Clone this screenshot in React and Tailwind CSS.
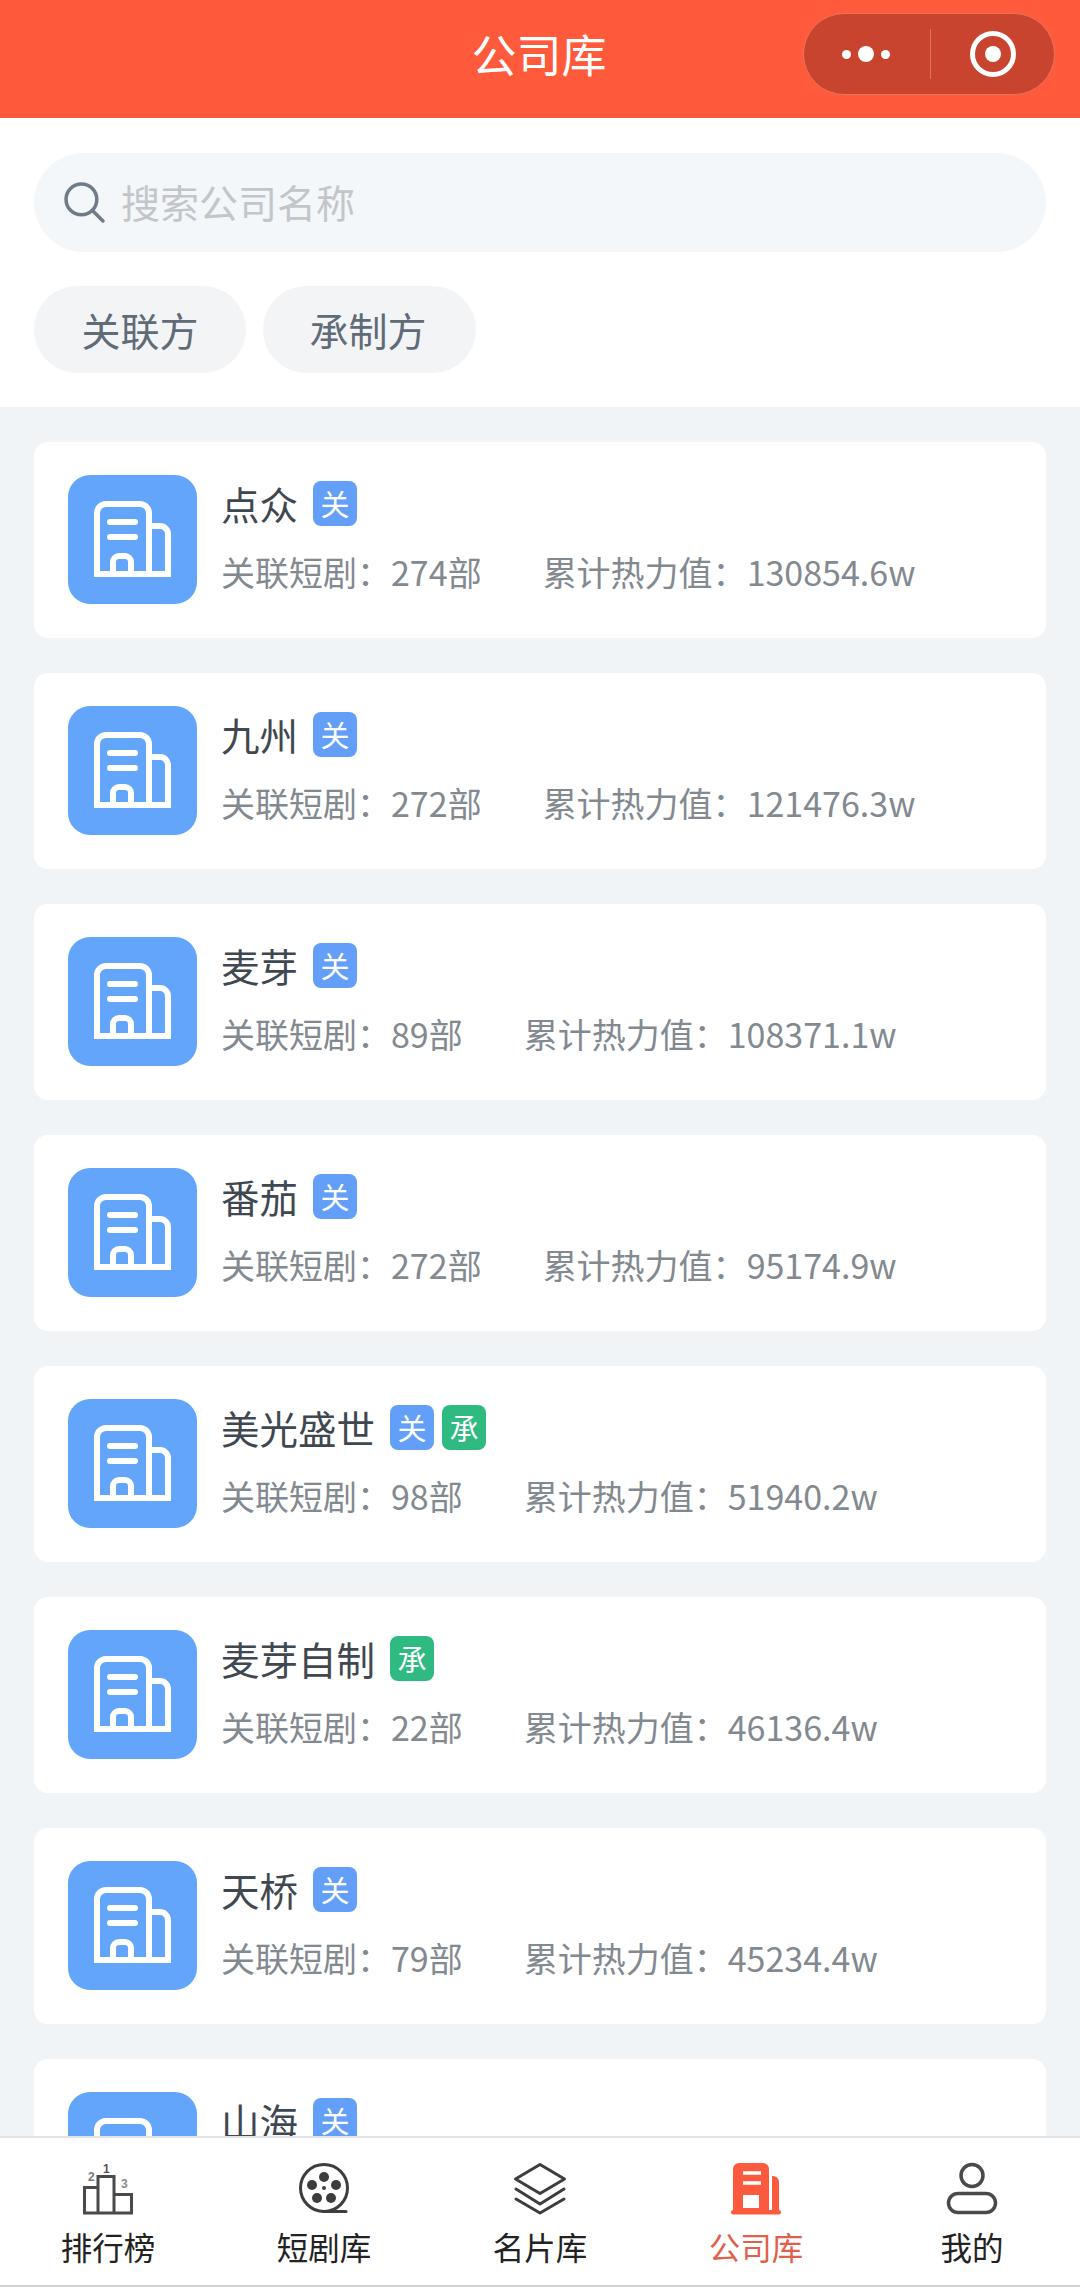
import React from "react";

const companies = [
  { name: "点众", tags: ["关"], count: "274", heat: "130854.6" },
  { name: "九州", tags: ["关"], count: "272", heat: "121476.3" },
  { name: "麦芽", tags: ["关"], count: "89", heat: "108371.1" },
  { name: "番茄", tags: ["关"], count: "272", heat: "95174.9" },
  { name: "美光盛世", tags: ["关", "承"], count: "98", heat: "51940.2" },
  { name: "麦芽自制", tags: ["承"], count: "22", heat: "46136.4" },
  { name: "天桥", tags: ["关"], count: "79", heat: "45234.4" },
  { name: "山海", tags: ["关"], count: "60", heat: "40112.5" },
];

function BuildingIcon() {
  return (
    <svg viewBox="0 0 129 129" className="w-[129px] h-[129px] block" fill="none" stroke="#fff" strokeWidth="6">
      <path d="M29 99V38a9 9 0 0 1 9-9h34a9 9 0 0 1 9 9v61" />
      <path d="M81 51h11a8 8 0 0 1 8 8v40" />
      <path d="M26 99h77" />
      <path d="M42 47h25M42 62h25" strokeLinecap="round" />
      <path d="M45 99V87a6 6 0 0 1 6-6h6a6 6 0 0 1 6 6v12" />
    </svg>
  );
}

function RankIcon() {
  return (
    <svg viewBox="0 0 54 54" className="w-[54px] h-[54px]" fill="none" stroke="#4a4a4a" strokeWidth="3">
      <path d="M3.500 51V25.500H17V51M17 51V14.500H33V51M33 32.500H50.500V51M2 51h50" />
      <text x="7" y="19" fontSize="12" fontWeight="700" fill="#777" stroke="none" fontFamily="'Liberation Sans',sans-serif">2</text>
      <text x="22" y="11" fontSize="12" fontWeight="700" fill="#555" stroke="none" fontFamily="'Liberation Sans',sans-serif">1</text>
      <text x="40" y="26" fontSize="12" fontWeight="700" fill="#888" stroke="none" fontFamily="'Liberation Sans',sans-serif">3</text>
    </svg>
  );
}

function ReelIcon() {
  return (
    <svg viewBox="0 0 54 54" className="w-[54px] h-[54px]" fill="none" stroke="#3d3d3d" strokeWidth="3">
      <circle cx="27" cy="26" r="23.500" />
      <path d="M27 49.500h22" strokeLinecap="round" />
      <g fill="#3d3d3d" stroke="none">
        <circle cx="27" cy="15" r="5" />
        <circle cx="39" cy="23" r="5" />
        <circle cx="34" cy="36" r="5" />
        <circle cx="20" cy="36" r="5" />
        <circle cx="15" cy="23" r="5" />
        <circle cx="27" cy="26" r="2" />
      </g>
    </svg>
  );
}

function LayersIcon() {
  return (
    <svg viewBox="0 0 54 54" className="w-[54px] h-[54px]" fill="none" stroke="#3d3d3d" strokeWidth="3" strokeLinejoin="round" strokeLinecap="round">
      <path d="M27 2.500 51.500 17 27 31.500 2.500 17Z" />
      <path d="M3 27 27 42 51 27" />
      <path d="M3 37 27 51 51 37" />
    </svg>
  );
}

function CompanyActiveIcon() {
  return (
    <svg viewBox="0 0 54 54" className="w-[54px] h-[54px]" fill="none">
      <path d="M4 7a6 6 0 0 1 6-6h24a6 6 0 0 1 6 6v44H4Z" fill="#fb5a3e" />
      <path d="M43 14h1a6 6 0 0 1 6 6v31h-7Z" fill="#fb5a3e" />
      <rect x="2" y="48" width="50" height="4.500" rx="2.250" fill="#fb5a3e" />
      <path d="M14 11h18M14 21h18" stroke="#fff" strokeWidth="3.500" />
      <rect x="14" y="33" width="16" height="13" fill="#fff" />
    </svg>
  );
}

function UserIcon() {
  return (
    <svg viewBox="0 0 54 54" className="w-[54px] h-[54px]" fill="none" stroke="#4a4a4a" strokeWidth="3.500">
      <circle cx="27" cy="13.500" r="11" />
      <rect x="3.500" y="31.500" width="47" height="19" rx="9.500" />
    </svg>
  );
}

function Tab({ icon, label, active }) {
  return (
    <div className="flex-1 flex flex-col items-center">
      {icon}
      <span className={`mt-[12px] text-[31.500px] leading-[36px] ${active ? "text-[#e0604c]" : "text-[#222222]"}`}>{label}</span>
    </div>
  );
}

function Card({ c }) {
  return (
    <div className="flex bg-white rounded-[14px] h-[196px] shrink-0 px-[34px] pt-[33px] gap-[25px]">
      <div className="w-[129px] h-[129px] rounded-[22px] bg-[#62a5fb] shrink-0">
        <BuildingIcon />
      </div>
      <div className="flex flex-col pt-[6px] -ml-px">
        <div className="flex items-center h-[45px] gap-[15px]">
          <span className="text-[38.500px] leading-[45px] text-[#3f4750]">{c.name}</span>
          <div className="flex gap-[8px]">
            {c.tags.map((t) => (
              <span
                key={t}
                className={`w-[44px] h-[45px] rounded-[8px] flex items-center justify-center text-white text-[29px] leading-none ${t === "关" ? "bg-[#639ff8]" : "bg-[#2fba82]"}`}
              >
                {t}
              </span>
            ))}
          </div>
        </div>
        <div className="flex mt-[23px] gap-[61px] text-[34px] leading-[46px] text-[#82898f] whitespace-nowrap">
          <span>关联短剧：{c.count}部</span>
          <span>累计热力值：{c.heat}w</span>
        </div>
      </div>
    </div>
  );
}

export default function App() {
  return (
    <div className="w-[1080px] h-[2287px] flex flex-col overflow-hidden bg-[#f0f4f7] font-['Noto_Sans_CJK_SC',sans-serif]">
      <header className="relative h-[118px] shrink-0 bg-[#ff5a3c] flex items-center justify-center pb-[10px]">
        <h1 className="text-[45px] leading-[52px] font-normal text-white -ml-[2px]">公司库</h1>
        <div className="absolute left-[803px] top-[13px] w-[252px] h-[82px] rounded-full bg-[#c9442e] border border-[#e8745c] flex items-center">
          <div className="flex-1 flex items-center justify-center gap-[7px] pr-[6px]">
            <span className="w-[9px] h-[9px] rounded-full bg-white" />
            <span className="w-[16px] h-[16px] rounded-full bg-white" />
            <span className="w-[9px] h-[9px] rounded-full bg-white" />
          </div>
          <div className="w-px h-[50px] bg-[#e0735d] -ml-[3px]" />
          <div className="flex-1 flex items-center justify-center">
            <div className="w-[46px] h-[46px] rounded-full border-[5px] border-white flex items-center justify-center">
              <span className="w-[16px] h-[16px] rounded-full bg-white" />
            </div>
          </div>
        </div>
      </header>

      <section className="h-[289px] shrink-0 bg-white px-[34px] pt-[35px]">
        <div className="h-[99px] rounded-full bg-[#f4f7f9] flex items-center pl-[30px] gap-[16px]">
          <svg viewBox="0 0 40 40" className="w-[41px] h-[41px] shrink-0" fill="none" stroke="#6f7b86" strokeWidth="3.400" strokeLinecap="round">
            <circle cx="17" cy="17" r="15" />
            <path d="M28 28 38 38" />
          </svg>
          <span className="text-[39px] leading-[46px] text-[#c2c6ca] -mt-[3px]">搜索公司名称</span>
        </div>
        <div className="flex gap-[17px] mt-[34px]">
          <div className="w-[212px] h-[87px] rounded-full bg-[#f3f4f6] flex items-center justify-center text-[39px] text-[#5f6b76]">关联方</div>
          <div className="w-[213px] h-[87px] rounded-full bg-[#f3f4f6] flex items-center justify-center text-[39px] text-[#5f6b76] pr-[3px]">承制方</div>
        </div>
      </section>

      <main className="flex-1 min-h-0 overflow-hidden px-[34px] pt-[35px] flex flex-col gap-[35px]">
        {companies.map((c) => (
          <Card key={c.name} c={c} />
        ))}
      </main>

      <nav className="h-[151px] shrink-0 bg-white border-t-2 border-b-2 border-t-[#e2e4e6] border-b-[#cfd1d3] flex pt-[24px]">
        <Tab icon={<RankIcon />} label="排行榜" />
        <Tab icon={<ReelIcon />} label="短剧库" />
        <Tab icon={<LayersIcon />} label="名片库" />
        <Tab icon={<CompanyActiveIcon />} label="公司库" active />
        <Tab icon={<UserIcon />} label="我的" />
      </nav>
    </div>
  );
}
